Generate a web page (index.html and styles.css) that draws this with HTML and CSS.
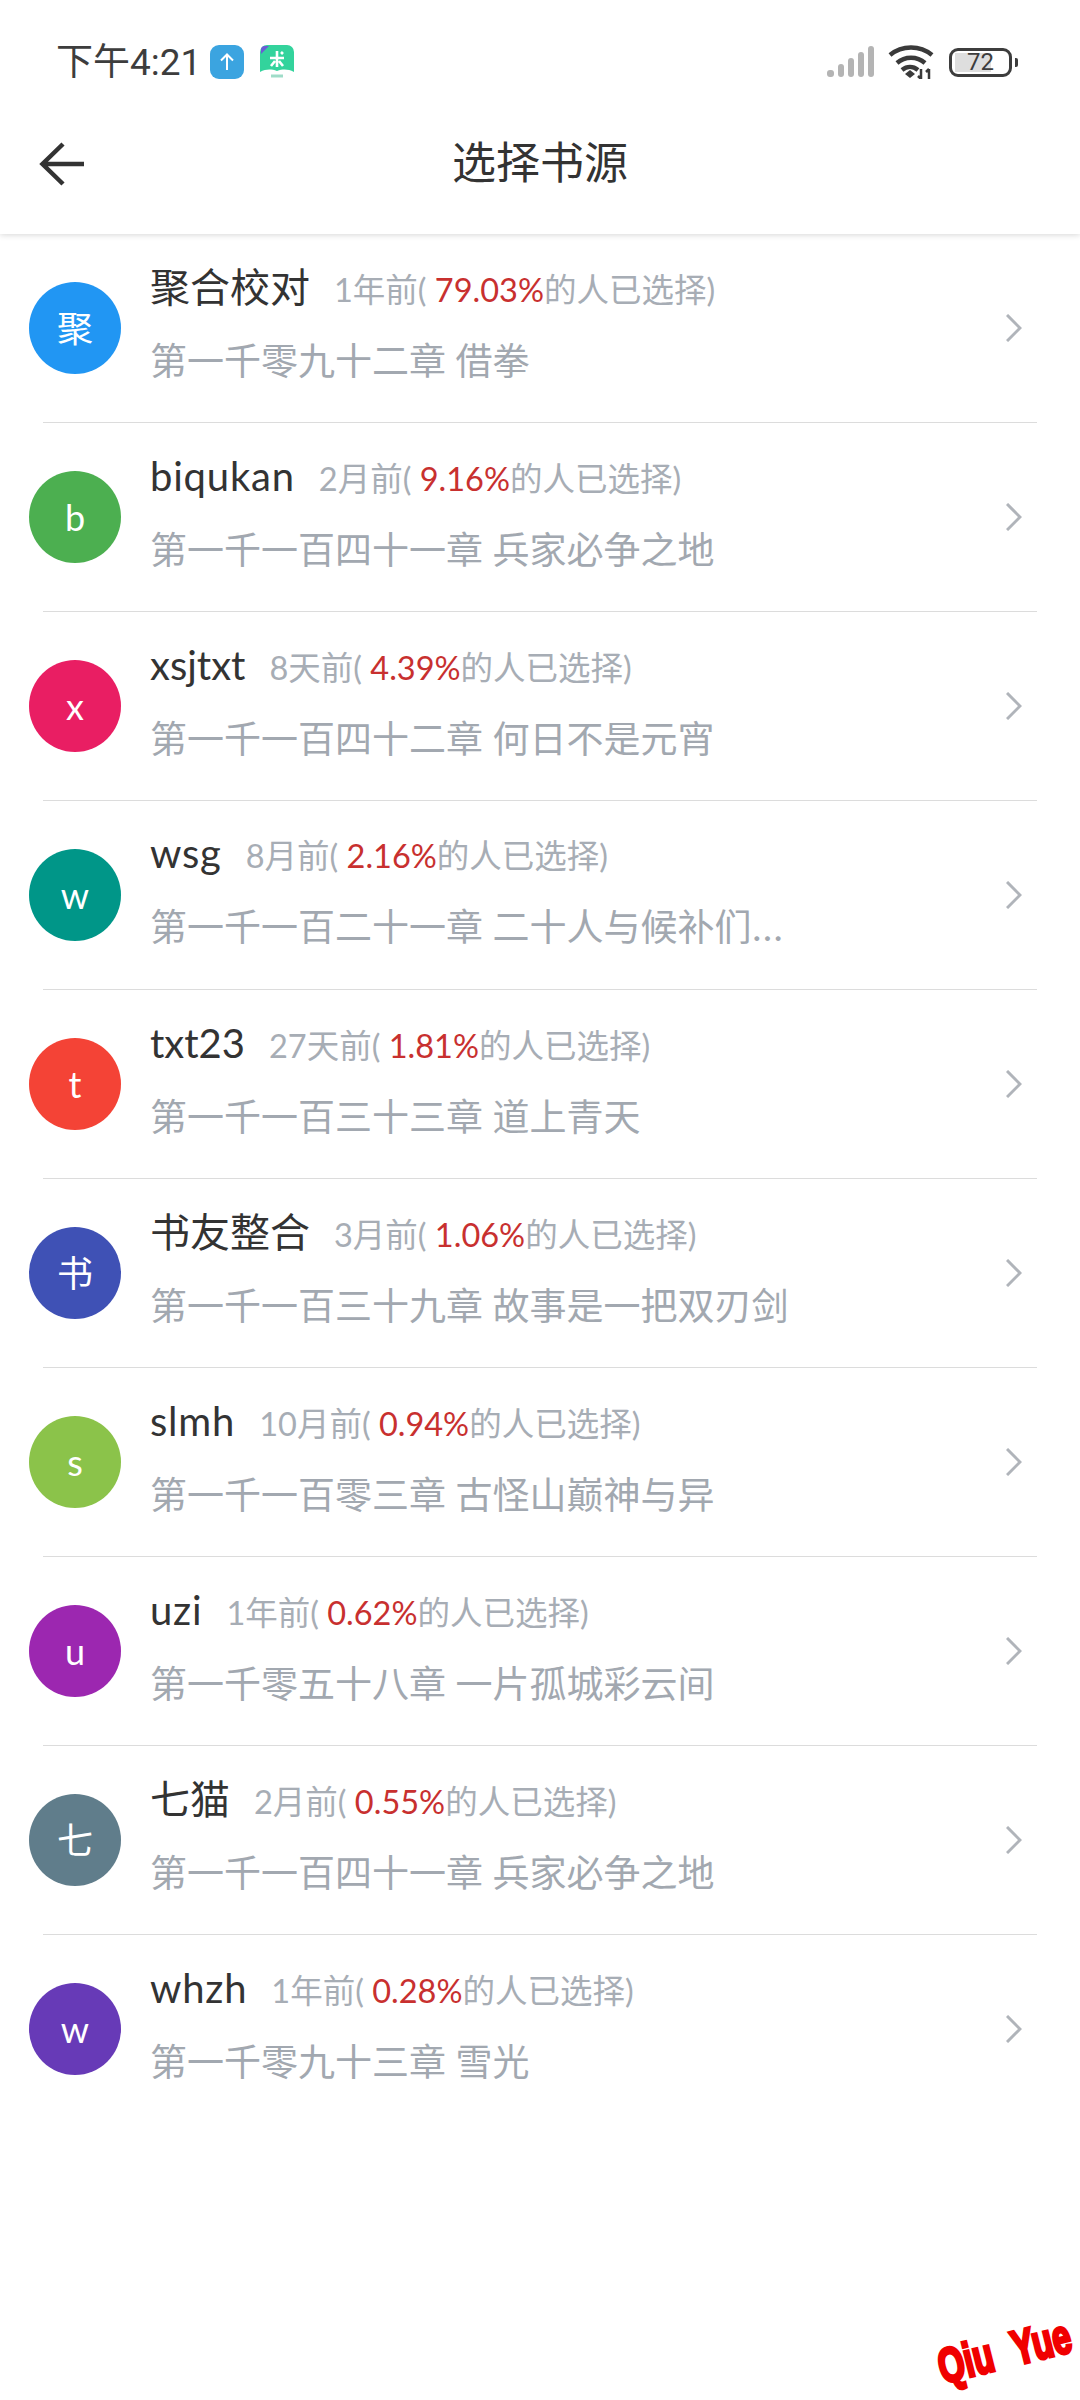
FILE: index.html
```html
<!DOCTYPE html>
<html lang="zh-CN">
<head>
<meta charset="utf-8">
<title>选择书源</title>
<link rel="stylesheet" href="styles.css">
</head>
<body>
<header class="top">
  <div class="status">
    <div class="status-left">
      <span class="time">下午4:21</span>
      <svg class="app-icon upload" viewBox="0 0 34 34"><rect width="34" height="34" rx="9" fill="#3ba4e0"/><path d="M17 25V10M11 15.500l6-6 6 6" fill="none" stroke="#fff" stroke-width="2"/></svg>
      <svg class="app-icon book" viewBox="0 0 34 34"><path d="M0 7a7 7 0 0 1 7-7h20a7 7 0 0 1 7 7v20c-6-3-11-3-17-1-6-2-11-2-17 1z" fill="#33d39c"/><path d="M1 9 9 1H5a4 4 0 0 0-4 4z" fill="#6a5cd6"/><path d="M17 6v16M10 13h14M11 21l4-5M23 21l-4-5M21 7l2 2" fill="none" stroke="#fff" stroke-width="2.600"/><path d="M11 31h12" stroke="#9fdcc8" stroke-width="3"/></svg>
    </div>
    <div class="status-right">
      <svg class="signal" viewBox="0 0 48 32"><g fill="#b4b4b4"><rect x="0" y="24" width="7" height="7" rx="3"/><rect x="11" y="18" width="6" height="13" rx="3"/><rect x="21" y="12" width="6" height="19" rx="3"/><rect x="31" y="6" width="6" height="25" rx="3"/><rect x="41" y="0" width="6" height="31" rx="3"/></g></svg>
      <svg class="wifi" viewBox="0 0 46 34"><g fill="none" stroke="#3a3a3a" stroke-width="4.500"><path d="M2 10c12-10 30-10 42 0"/><path d="M9 18c8-7 20-7 28 0"/><path d="M14 25c5-4 11-4 16 0"/></g><path d="M17 29l5-4 5 4-5 4z" fill="#3a3a3a"/><path d="M33 24v10M30 31l3 3M41 34V24M38 27l3-3" stroke="#3a3a3a" stroke-width="2.500" fill="none"/></svg>
      <div class="battery-wrap">
        <div class="battery"><div class="battery-fill"></div><span class="battery-num">72</span></div>
        <div class="battery-cap"></div>
      </div>
    </div>
  </div>
  <nav class="nav">
    <svg class="back" viewBox="0 0 46 44"><path d="M45 22H3M24 2 3.500 22 24 42" fill="none" stroke="#333" stroke-width="4.500"/></svg>
    <h1 class="nav-title">选择书源</h1>
  </nav>
</header>
<main class="list">
  <section class="row">
    <div class="avatar c-blue">聚</div>
    <div class="body"><div class="line1"><span class="name">聚合校对</span><span class="meta">1年前( <em class="pct">79.03%</em>的人已选择)</span></div><div class="chapter">第一千零九十二章 借拳</div></div>
    <svg class="chev" viewBox="0 0 16 28"><path d="M1 1l13 13L1 27" /></svg>
  </section>
  <section class="row">
    <div class="avatar c-green">b</div>
    <div class="body"><div class="line1"><span class="name latin">biqukan</span><span class="meta">2月前( <em class="pct">9.16%</em>的人已选择)</span></div><div class="chapter">第一千一百四十一章 兵家必争之地</div></div>
    <svg class="chev" viewBox="0 0 16 28"><path d="M1 1l13 13L1 27" /></svg>
  </section>
  <section class="row">
    <div class="avatar c-pink">x</div>
    <div class="body"><div class="line1"><span class="name">xsjtxt</span><span class="meta">8天前( <em class="pct">4.39%</em>的人已选择)</span></div><div class="chapter">第一千一百四十二章 何日不是元宵</div></div>
    <svg class="chev" viewBox="0 0 16 28"><path d="M1 1l13 13L1 27" /></svg>
  </section>
  <section class="row">
    <div class="avatar c-teal">w</div>
    <div class="body"><div class="line1"><span class="name latin">wsg</span><span class="meta">8月前( <em class="pct">2.16%</em>的人已选择)</span></div><div class="chapter">第一千一百二十一章 二十人与候补们<span class="ell">…</span></div></div>
    <svg class="chev" viewBox="0 0 16 28"><path d="M1 1l13 13L1 27" /></svg>
  </section>
  <section class="row">
    <div class="avatar c-red">t</div>
    <div class="body"><div class="line1"><span class="name">txt23</span><span class="meta">27天前( <em class="pct">1.81%</em>的人已选择)</span></div><div class="chapter">第一千一百三十三章 道上青天</div></div>
    <svg class="chev" viewBox="0 0 16 28"><path d="M1 1l13 13L1 27" /></svg>
  </section>
  <section class="row">
    <div class="avatar c-indigo">书</div>
    <div class="body"><div class="line1"><span class="name">书友整合</span><span class="meta">3月前( <em class="pct">1.06%</em>的人已选择)</span></div><div class="chapter">第一千一百三十九章 故事是一把双刃剑</div></div>
    <svg class="chev" viewBox="0 0 16 28"><path d="M1 1l13 13L1 27" /></svg>
  </section>
  <section class="row">
    <div class="avatar c-lime">s</div>
    <div class="body"><div class="line1"><span class="name latin">slmh</span><span class="meta">10月前( <em class="pct">0.94%</em>的人已选择)</span></div><div class="chapter">第一千一百零三章 古怪山巅神与异</div></div>
    <svg class="chev" viewBox="0 0 16 28"><path d="M1 1l13 13L1 27" /></svg>
  </section>
  <section class="row">
    <div class="avatar c-purple">u</div>
    <div class="body"><div class="line1"><span class="name latin">uzi</span><span class="meta">1年前( <em class="pct">0.62%</em>的人已选择)</span></div><div class="chapter">第一千零五十八章 一片孤城彩云间</div></div>
    <svg class="chev" viewBox="0 0 16 28"><path d="M1 1l13 13L1 27" /></svg>
  </section>
  <section class="row">
    <div class="avatar c-slate">七</div>
    <div class="body"><div class="line1"><span class="name">七猫</span><span class="meta">2月前( <em class="pct">0.55%</em>的人已选择)</span></div><div class="chapter">第一千一百四十一章 兵家必争之地</div></div>
    <svg class="chev" viewBox="0 0 16 28"><path d="M1 1l13 13L1 27" /></svg>
  </section>
  <section class="row">
    <div class="avatar c-violet">w</div>
    <div class="body"><div class="line1"><span class="name latin">whzh</span><span class="meta">1年前( <em class="pct">0.28%</em>的人已选择)</span></div><div class="chapter">第一千零九十三章 雪光</div></div>
    <svg class="chev" viewBox="0 0 16 28"><path d="M1 1l13 13L1 27" /></svg>
  </section>
</main>
<div class="watermark"><span class="wm-text">Qiu</span><span class="wm-text">Yue</span></div>
</body>
</html>
```
FILE: styles.css
```css
* { box-sizing: border-box; }
html, body { margin: 0; padding: 0; }
body {
  width: 1080px;
  height: 2400px;
  background: #fff;
  position: relative;
  overflow: hidden;
  font-family: "Lato", "Noto Sans CJK SC", "Noto Sans", sans-serif;
  color: #333;
}
.top {
  height: 234px;
  background: #fff;
  box-shadow: 0 1px 6px rgba(0, 0, 0, .16);
  position: relative;
}
.status {
  height: 90px;
  padding: 36px 62px 0 56px;
  display: flex;
  justify-content: space-between;
  align-items: center;
}
.status-left { display: flex; align-items: center; }
.time { font-family: "Roboto", "Noto Sans CJK SC", sans-serif; font-size: 37px; line-height: 46px; color: #3d3d3d; }
.app-icon { display: block; width: 34px; height: 34px; position: relative; top: -1px; }
.upload { margin-left: 9px; }
.book { margin-left: 16px; }
.status-right { display: flex; align-items: center; position: relative; top: -1px; }
.signal { display: block; width: 48px; height: 32px; }
.wifi { display: block; width: 46px; height: 34px; margin-left: 13px; }
.battery-wrap { display: flex; align-items: center; margin-left: 15px; }
.battery {
  width: 63px;
  height: 29px;
  border: 3.500px solid #3d3d3d;
  border-radius: 9px;
  position: relative;
  display: flex;
  align-items: center;
  justify-content: center;
}
.battery-fill {
  position: absolute;
  left: 3px;
  top: 2px;
  bottom: 2px;
  width: 36px;
  background: #dedede;
}
.battery-num { position: relative; font-family: "Roboto", sans-serif; font-size: 24px; line-height: 22px; color: #3d3d3d; }
.battery-cap { width: 3px; height: 9px; background: #3d3d3d; border-radius: 0 2px 2px 0; margin-left: 3px; }
.nav {
  height: 144px;
  position: relative;
  display: flex;
  align-items: center;
  justify-content: center;
}
.back { position: absolute; left: 39px; top: 52px; width: 46px; height: 44px; display: block; }
.nav-title { margin: 0; font-size: 44px; font-weight: 400; line-height: 60px; color: #333; }
.list { display: flex; flex-direction: column; }
.row {
  height: 189px;
  flex: none;
  display: flex;
  align-items: center;
  padding: 0 58px 2px 29px;
  position: relative;
}
.row::after {
  content: "";
  position: absolute;
  left: 43px;
  right: 43px;
  bottom: 0;
  height: 1px;
  background: #dcdcdc;
}
.row:last-child::after { display: none; }
.avatar {
  width: 92px;
  height: 92px;
  flex: none;
  border-radius: 50%;
  color: #fff;
  font-size: 36px;
  line-height: 92px;
  text-align: center;
}
.c-blue { background: #2196f3; }
.c-green { background: #4caf50; }
.c-pink { background: #e91e63; }
.c-teal { background: #009688; }
.c-red { background: #f44336; }
.c-indigo { background: #3f51b5; }
.c-lime { background: #8bc34a; }
.c-purple { background: #9c27b0; }
.c-slate { background: #607d8b; }
.c-violet { background: #673ab7; }
.body { flex: 1; margin-left: 29px; min-width: 0; padding-bottom: 8px; }
.line1 { display: flex; align-items: baseline; height: 52px; line-height: 52px; }
.name { font-size: 40px; color: #333; }
.latin { letter-spacing: .8px; }
.meta { font-size: 32.500px; color: #a7adb5; margin-left: 24px; white-space: pre; }
.pct { font-style: normal; color: #c8302f; }
.chapter { font-size: 37px; line-height: 52px; margin-top: 22px; color: #a2a8b0; white-space: nowrap; }
.ell { font-family: "Inter", sans-serif; }
.chev { width: 16px; height: 28px; flex: none; fill: none; stroke: #b0b4ba; stroke-width: 3; }
.watermark {
  position: absolute;
  left: 944px;
  top: 2345px;
  display: flex;
  gap: 18px;
  transform: rotate(-14deg);
  transform-origin: left bottom;
}
.wm-text {
  display: inline-block;
  width: 58px;
  font-family: "Liberation Sans", sans-serif;
  font-weight: 700;
  font-size: 44px;
  line-height: 44px;
  color: #f00000;
  -webkit-text-stroke: 3px #f00000;
  transform: scale(.76, 1.1);
  transform-origin: left center;
}
```
